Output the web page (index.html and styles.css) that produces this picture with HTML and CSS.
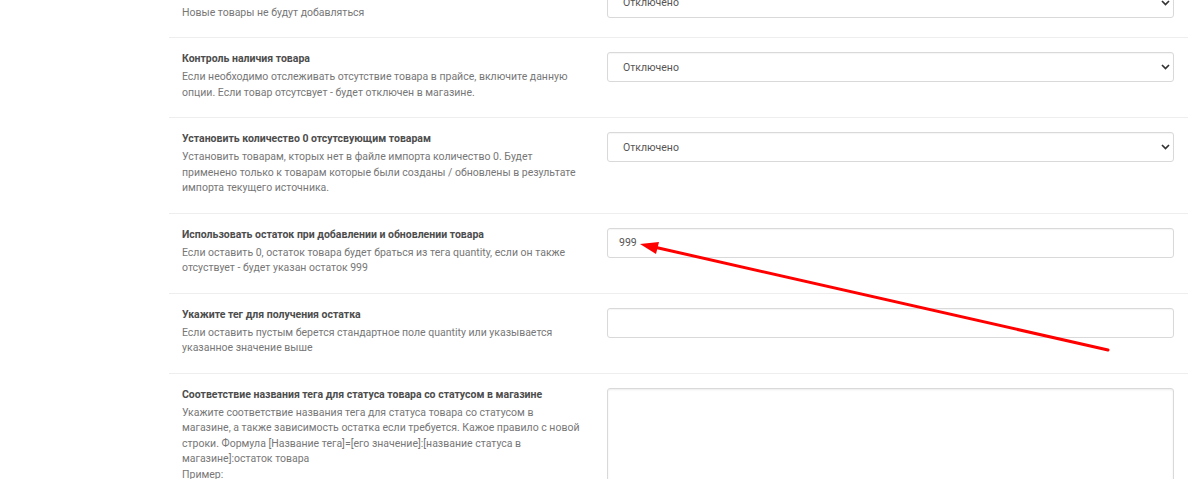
FILE: index.html
```html
<!DOCTYPE html>
<html lang="ru">
<head>
    <meta charset="UTF-8">
    <title>Настройки импорта</title>
    <link rel="stylesheet" href="styles.css">
</head>
<body>
    <div class="page">
        <div class="settings">
            <div class="setting-row">
                <div class="setting-info">
                    <div class="setting-title">Не добавлять новые товары</div>
                    <div class="setting-desc">Новые товары не будут добавляться</div>
                </div>
                <div class="setting-control">
                    <div class="select-wrap">
                        <select class="form-control"><option>Отключено</option><option>Включено</option></select>
                        <svg class="select-caret" width="9" height="6" viewBox="0 0 9 6"><path d="M1 1 L4.5 4.5 L8 1" fill="none" stroke="#333" stroke-width="1.7"/></svg>
                    </div>
                </div>
            </div>

            <div class="setting-row">
                <div class="setting-info">
                    <div class="setting-title">Контроль наличия товара</div>
                    <div class="setting-desc">Если необходимо отслеживать отсутствие товара в прайсе, включите данную опции. Если товар отсутсвует - будет отключен в магазине.</div>
                </div>
                <div class="setting-control">
                    <div class="select-wrap">
                        <select class="form-control"><option>Отключено</option><option>Включено</option></select>
                        <svg class="select-caret" width="9" height="6" viewBox="0 0 9 6"><path d="M1 1 L4.5 4.5 L8 1" fill="none" stroke="#333" stroke-width="1.7"/></svg>
                    </div>
                </div>
            </div>

            <div class="setting-row">
                <div class="setting-info">
                    <div class="setting-title">Установить количество 0 отсутсвующим товарам</div>
                    <div class="setting-desc">Установить товарам, кторых нет в файле импорта количество 0. Будет<br>применено только к товарам которые были созданы / обновлены в результате импорта текущего источника.</div>
                </div>
                <div class="setting-control">
                    <div class="select-wrap">
                        <select class="form-control"><option>Отключено</option><option>Включено</option></select>
                        <svg class="select-caret" width="9" height="6" viewBox="0 0 9 6"><path d="M1 1 L4.5 4.5 L8 1" fill="none" stroke="#333" stroke-width="1.7"/></svg>
                    </div>
                </div>
            </div>

            <div class="setting-row">
                <div class="setting-info">
                    <div class="setting-title">Использовать остаток при добавлении и обновлении товара</div>
                    <div class="setting-desc">Если оставить 0, остаток товара будет браться из тега quantity, если он также отсуствует - будет указан остаток 999</div>
                </div>
                <div class="setting-control">
                    <input class="form-control" type="text" value="999">
                </div>
            </div>

            <div class="setting-row">
                <div class="setting-info">
                    <div class="setting-title">Укажите тег для получения остатка</div>
                    <div class="setting-desc">Если оставить пустым берется стандартное поле quantity или указывается указанное значение выше</div>
                </div>
                <div class="setting-control">
                    <input class="form-control" type="text" value="">
                </div>
            </div>

            <div class="setting-row">
                <div class="setting-info">
                    <div class="setting-title">Соответствие названия тега для статуса товара со статусом в магазине</div>
                    <div class="setting-desc setting-desc-long">Укажите соответствие названия тега для статуса товара со статусом в<br>магазине, а также зависимость остатка если требуется. Кажое правило с новой<br>строки. Формула [Название тега]=[его значение]:[название статуса в<br>магазине]:остаток товара<br>Пример:<br>available=true:В наличии:999<br>available=false:Нет в наличии:0</div>
                </div>
                <div class="setting-control">
                    <textarea class="form-control textarea"></textarea>
                </div>
            </div>
        </div>

        <!-- red pointer drawn over the screenshot -->
        <svg class="annotation" width="1200" height="479" viewBox="0 0 1200 479">
            <line x1="1108" y1="350" x2="654" y2="247" stroke="#ff0000" stroke-width="3" stroke-linecap="round"/>
            <polygon points="640,244 659,242 656,254" fill="#ff0000"/>
        </svg>
    </div>
</body>
</html>
```

FILE: styles.css
```css
* {
    margin: 0;
    padding: 0;
    box-sizing: border-box;
}

body {
    font-family: Roboto, "Liberation Sans", Arial, sans-serif;
    font-size: 10.5px;
    background: #fff;
    color: #555;
}

.page {
    position: relative;
    display: flow-root;
    padding: 0 12px 0 169px;
}

.settings {
    margin-top: -26.5px;
}

.setting-row {
    display: grid;
    grid-template-columns: 415px 1fr;
    column-gap: 10px;
    align-items: start;
    padding: 14px 14px 17px 13px;
    border-bottom: 1px solid #eeeeee;
}

.setting-title {
    font-weight: 700;
    color: #4d4d4d;
    line-height: 13px;
    margin-bottom: 4px;
}

.setting-desc {
    color: #777;
    line-height: 15.5px;
}

.setting-desc-long {
    white-space: nowrap;
}

.form-control {
    display: block;
    width: 100%;
    height: 30px;
    padding: 0 11px;
    font-family: inherit;
    font-size: 10.5px;
    color: #555;
    background: #fff;
    border: 1px solid #d9d9d9;
    border-radius: 3px;
    box-shadow: inset 0 1px 1px rgba(0,0,0,0.04);
    outline: none;
}

.select-wrap {
    position: relative;
}

.select-wrap select {
    appearance: none;
    -webkit-appearance: none;
    padding-left: 15px;
}

.select-caret {
    position: absolute;
    right: 4px;
    top: 12px;
}

.textarea {
    height: 130px;
    resize: none;
    box-shadow: inset 0 1px 2px rgba(0,0,0,0.08);
}

.annotation {
    position: absolute;
    left: 0;
    top: 0;
    pointer-events: none;
}
```
